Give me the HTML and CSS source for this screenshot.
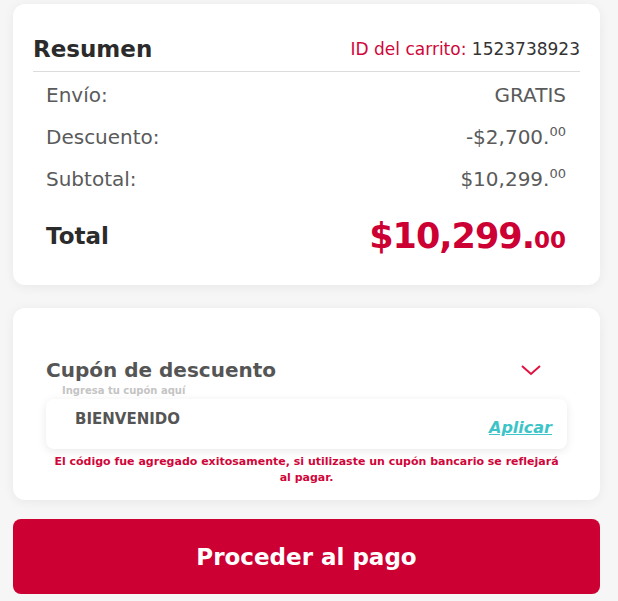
FILE: index.html
```html
<!DOCTYPE html>
<html lang="es">
<head>
  <meta charset="UTF-8">
  <meta name="viewport" content="width=device-width, initial-scale=1.0">
  <title>Resumen del carrito</title>
  <link rel="stylesheet" href="styles.css">
</head>
<body>
  <div class="wrapper">
    <div class="card summary">
      <div class="summary-head">
        <h2>Resumen</h2>
        <p class="cart-id"><span>ID del carrito:</span> 1523738923</p>
      </div>
      <div class="row">
        <span>Envío:</span>
        <span>GRATIS</span>
      </div>
      <div class="row">
        <span>Descuento:</span>
        <span>-$2,700.<sup>00</sup></span>
      </div>
      <div class="row">
        <span>Subtotal:</span>
        <span>$10,299.<sup>00</sup></span>
      </div>
      <div class="row total">
        <span>Total</span>
        <span class="total-amount">$10,299.<small>00</small></span>
      </div>
    </div>

    <div class="card coupon">
      <div class="coupon-head">
        <h3>Cupón de descuento</h3>
        <svg class="chevron" width="22" height="12" viewBox="0 0 22 12">
          <path d="M2 2 L11 10 L20 2" fill="none" stroke="#e0103f" stroke-width="2"/>
        </svg>
      </div>
      <label class="coupon-label" for="coupon">Ingresa tu cupón aquí</label>
      <div class="coupon-box">
        <input type="text" id="coupon" value="BIENVENIDO">
        <a href="#" class="apply">Aplicar</a>
      </div>
      <p class="coupon-msg">El código fue agregado exitosamente, si utilizaste un cupón bancario se reflejará al pagar.</p>
    </div>

    <button class="pay-btn">Proceder al pago</button>
  </div>
</body>
</html>
```

FILE: styles.css
```css
/* Resumen del carrito */
body {
  margin: 0;
  padding: 0;
  background-color: #f6f6f6;
  font-family: "DejaVu Sans", Arial, sans-serif;
}
.wrapper {
  width: 587px;
  margin-left: 13px;
  padding-top: 4px;
}
.card {
  background: #ffffff;
  border-radius: 12px;
  box-shadow: 0 2px 12px rgba(0, 0, 0, 0.06);
}
.summary {
  height: 281px;
  padding: 0 20px;
  box-sizing: border-box;
}
.summary-head {
  display: flex;
  justify-content: space-between;
  align-items: flex-end;
  padding-top: 30px;
  padding-bottom: 7px;
  border-bottom: 1px solid #dcdcdc;
}
.summary-head h2 {
  margin: 0;
  font-size: 23px;
  line-height: 30px;
  color: #2b2b2b;
}
.cart-id {
  margin: 0 0 3px;
  font-size: 17px;
  line-height: 24px;
  color: #333333;
}
.cart-id span {
  color: #d0063a;
}
.row {
  display: flex;
  justify-content: space-between;
  align-items: center;
  padding: 0 14px 0 13px;
  height: 42px;
  font-size: 20px;
  color: #5a5a5a;
}
.row:nth-child(2) {
  margin-top: 2px;
}
.row sup {
  font-size: 13px;
  vertical-align: 8px;
  line-height: 0;
}
.row.total {
  height: 54px;
  margin-top: 9px;
}
.row.total > span:first-child {
  font-weight: bold;
  font-size: 23px;
  color: #2b2b2b;
}
.total-amount {
  font-weight: bold;
  font-size: 35px;
  color: #cc0033;
  letter-spacing: -1px;
}
.total-amount small {
  font-size: 23px;
  letter-spacing: 0;
}
.coupon {
  margin-top: 23px;
  height: 192px;
  padding: 48px 33px 0;
  box-sizing: border-box;
}
.coupon-head {
  display: flex;
  justify-content: space-between;
  align-items: center;
  padding-right: 25px;
}
.coupon-head h3 {
  margin: 0;
  font-size: 20px;
  line-height: 28px;
  color: #555555;
}
.coupon-label {
  display: block;
  margin-left: 16px;
  font-size: 10px;
  font-weight: bold;
  line-height: 14px;
  color: #c4c4c4;
}
.coupon-box {
  display: flex;
  justify-content: space-between;
  align-items: center;
  height: 50px;
  margin-top: 1px;
  padding: 0 15px 0 29px;
  background: #ffffff;
  border-radius: 8px;
  box-shadow: 0 2px 10px rgba(0, 0, 0, 0.09);
}
.coupon-box input {
  border: none;
  outline: none;
  padding: 0;
  margin-bottom: 10px;
  font-family: inherit;
  font-size: 15px;
  font-weight: bold;
  color: #555555;
  width: 200px;
}
.apply {
  font-size: 16px;
  font-weight: bold;
  font-style: italic;
  color: #3cc4c9;
  margin-top: 6px;
}
.coupon-msg {
  margin: 5px -2px 0;
  padding: 0 8px;
  font-size: 11px;
  font-weight: bold;
  line-height: 16px;
  text-align: center;
  color: #d0063a;
}
.pay-btn {
  display: block;
  width: 100%;
  height: 75px;
  margin-top: 19px;
  border: none;
  border-radius: 8px;
  background-color: #cc0033;
  color: #ffffff;
  font-family: inherit;
  font-size: 23px;
  font-weight: bold;
  cursor: pointer;
}
```
